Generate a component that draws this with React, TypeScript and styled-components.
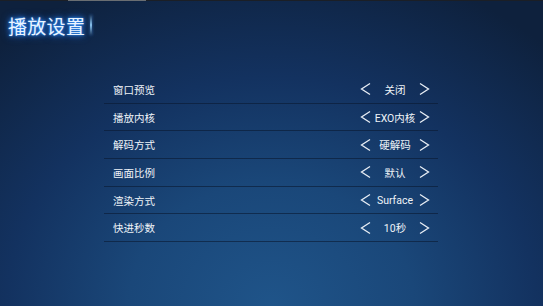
import { FC } from 'react'
import styled, { createGlobalStyle } from 'styled-components'

interface ISettingRow {
	label: string
	value: string
}

const settings: ISettingRow[] = [
	{ label: '窗口预览', value: '关闭' },
	{ label: '播放内核', value: 'EXO内核' },
	{ label: '解码方式', value: '硬解码' },
	{ label: '画面比例', value: '默认' },
	{ label: '渲染方式', value: 'Surface' },
	{ label: '快进秒数', value: '10秒' },
]

const Chevron: FC<{ dir: 'left' | 'right' }> = ({ dir }) => (
	<ArrowIcon width='11' height='14' viewBox='0 0 11 14'>
		{dir === 'left' ? (
			<polyline points='10,1.5 1.5,7 10,12.5' />
		) : (
			<polyline points='1,1.5 9.5,7 1,12.5' />
		)}
	</ArrowIcon>
)

const App: FC = () => {
	return (
		<Screen>
			<GlobalStyle />
			<TopStrip>
				<TopLine />
			</TopStrip>
			<Header>
				<Title>播放设置</Title>
				<TitleMark />
			</Header>

			<List>
				{settings.map(item => (
					<Row key={item.label}>
						<Label>{item.label}</Label>
						<Picker>
							<Chevron dir='left' />
							<Value>{item.value}</Value>
							<Chevron dir='right' />
						</Picker>
					</Row>
				))}
			</List>
		</Screen>
	)
}

export default App

const GlobalStyle = createGlobalStyle`
	html, body {
		margin: 0;
		padding: 0;
		background: #0f2140;
	}
	* {
		box-sizing: border-box;
	}
`

const Screen = styled.div`
	width: 543px;
	height: 306px;
	overflow: hidden;
	font-family: 'Roboto', 'Noto Sans CJK SC', sans-serif;
	color: #f2f6fb;
	background: radial-gradient(
		ellipse 75% 115% at 50% 100%,
		#1f5489 0%,
		#1a4779 35%,
		#133260 65%,
		#0e213d 100%
	);
`

const TopStrip = styled.div`
	height: 1px;
	background: #1b1f26;
	position: relative;
`

const TopLine = styled.div`
	position: absolute;
	left: 68px;
	width: 78px;
	height: 1px;
	background: #6a6e72;
`

const Header = styled.div`
	display: flex;
	align-items: center;
	height: 50px;
	padding: 0 0 0 8px;
	margin-top: -1px;
`

const Title = styled.h1`
	margin: 0;
	font-family: 'Noto Sans CJK SC', sans-serif;
	font-weight: 400;
	font-size: 19px;
	line-height: 1;
	letter-spacing: 0.3px;
	color: #eaf4ff;
	text-shadow: 0 0 2px #3a9bff, 0 0 5px #2a7ff0, 0 0 8px #1f6fe0;
`

const TitleMark = styled.span`
	width: 2px;
	height: 20px;
	margin-left: 5px;
	background: linear-gradient(
		to bottom,
		rgba(120, 190, 255, 0.1),
		rgba(150, 210, 255, 0.9) 50%,
		rgba(120, 190, 255, 0.1)
	);
	box-shadow: 0 0 3px rgba(80, 160, 255, 0.6);
`

const List = styled.div`
	display: flex;
	flex-direction: column;
	width: 334px;
	margin: 26px 0 0 104px;
`

const Row = styled.div`
	display: flex;
	align-items: center;
	justify-content: space-between;
	height: 27.7px;
	padding: 0 8px 0 9px;
	border-bottom: 1px solid rgba(10, 25, 48, 0.6);
`

const Label = styled.span`
	font-family: 'Noto Sans CJK SC', sans-serif;
	font-size: 10.5px;
	color: #eef3f8;
`

const Picker = styled.div`
	display: flex;
	align-items: center;
	width: 70px;
	justify-content: space-between;
`

const Value = styled.span`
	flex: 1;
	text-align: center;
	font-family: 'Roboto', 'Noto Sans CJK SC', sans-serif;
	font-size: 10.5px;
	color: #eef3f8;
	white-space: nowrap;
`

const ArrowIcon = styled.svg`
	flex: none;
	fill: none;
	stroke: #e8eef5;
	stroke-width: 1.3;
`
